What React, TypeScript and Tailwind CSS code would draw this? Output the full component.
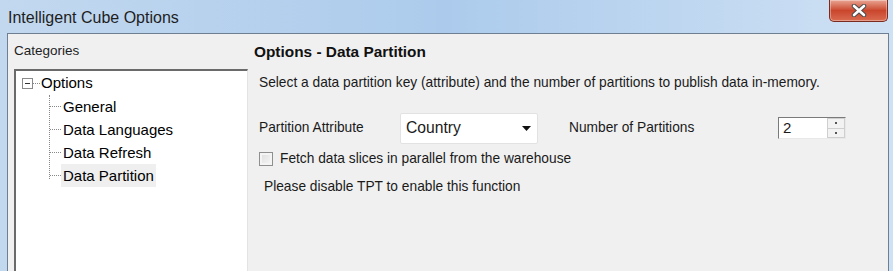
import { useState } from 'react';

const treeItems = ['General', 'Data Languages', 'Data Refresh', 'Data Partition'];

// Classic Windows 7 dialog: title bar, categories tree on the left, options on the right
const CloseButton = () => (
  <div className="w-[59px] h-[22px] rounded-b-[5px] border border-t-0 border-[#7a2a1e] bg-gradient-to-b from-[#e8a493] via-[#c9462c] to-[#d96b50] flex items-center justify-center shadow-[inset_0_0_0_1px_rgba(255,255,255,0.35)]">
    <svg width="16" height="13" viewBox="0 0 16 13">
      <path d="M3 2 L13 11 M13 2 L3 11" stroke="#4a4a4a" strokeWidth="4.5" strokeLinecap="round" />
      <path d="M3 2 L13 11 M13 2 L3 11" stroke="#ffffff" strokeWidth="2.6" strokeLinecap="round" />
    </svg>
  </div>
);

const App = () => {
  const [selected, setSelected] = useState('Data Partition');
  const [fetchParallel, setFetchParallel] = useState(false);

  return (
    <div
      className="w-[893px] h-[271px] overflow-hidden flex flex-col bg-gradient-to-r from-[#c2d8ef] via-[#accbec] to-[#cfe1f4] text-[#000]"
      style={{ fontFamily: '"Liberation Sans", Arial, sans-serif' }}
    >
      {/* Title bar */}
      <div className="h-[33px] flex justify-between pl-[8px] pr-[5px]">
        <span className="text-[16px] text-[#1e1e1e] pt-[6px]">Intelligent Cube Options</span>
        <CloseButton />
      </div>

      {/* Client area */}
      <div className="flex-1 flex pl-[7px] pr-[4px]">
        <div className="flex-1 flex border border-b-0 border-[#6e7f92] bg-[#f0f0f0]">
          {/* Categories */}
          <div className="w-[240px] flex flex-col pl-[6px]">
            <div className="h-[35px] flex items-center text-[13.5px] text-[#1e1e1e]">Categories</div>
            <div className="flex-1 bg-white border-t-2 border-l-2 border-r border-t-[#6a6a6a] border-l-[#6a6a6a] border-r-[#e3e3e3] pl-[6px]">
              <div className="flex items-center h-[24px]">
                <div className="w-[11px] h-[11px] border border-[#8a8a8a] bg-white flex items-center justify-center">
                  <div className="w-[5px] h-px bg-[#333]" />
                </div>
                <div className="w-[7px] border-t border-dotted border-[#888]" />
                <span className="text-[15px] pl-[1px]">Options</span>
              </div>
              <div className="ml-[27px] border-l border-dotted border-[#888] h-[84px] flex flex-col">
                {treeItems.map((item) => (
                  <div key={item} className="flex items-center h-[23.3px]" onClick={() => setSelected(item)}>
                    <div className="w-[11px] border-t border-dotted border-[#888]" />
                    <span
                      className={`text-[15px] px-[2px] leading-[23px] ${selected === item ? 'bg-[#efefef]' : ''}`}
                    >
                      {item}
                    </span>
                  </div>
                ))}
              </div>
            </div>
          </div>

          {/* Options panel */}
          <div className="flex-1 flex flex-col pl-[6px] text-[13.75px] text-[#1a1a1a]">
            <div className="h-[35px] flex items-center text-[15.4px] font-bold text-[#111]">Options - Data Partition</div>
            <div className="pl-[5px] pt-[4px]">Select a data partition key (attribute) and the number of partitions to publish data in-memory.</div>

            <div className="flex items-center pl-[5px] mt-[19px] h-[31px]">
              <span className="w-[141px]">Partition Attribute</span>
              <div className="w-[138px] h-[31px] bg-white border border-[#e2e2e2] rounded-[2px] flex items-center justify-between pl-[5px] pr-[6px]">
                <span className="text-[15.7px]">Country</span>
                <svg width="9" height="5" viewBox="0 0 9 5">
                  <path d="M0 0 H9 L4.5 5 Z" fill="#111" />
                </svg>
              </div>
              <span className="ml-[31px] w-[209px]">Number of Partitions</span>
              <div className="w-[68px] h-[22px] bg-white border border-t-[#7a7a7a] border-l-[#7a7a7a] border-r-[#e8e8e8] border-b-[#e8e8e8] flex">
                <span className="flex-1 text-[15px] leading-[20px] pl-[4px]">2</span>
                <div className="w-[18px] flex flex-col">
                  <div className="flex-1 bg-[#f2f2f2] border border-[#cfcfcf] flex items-center justify-center">
                    <div className="w-[2px] h-[2px] bg-[#555]" />
                  </div>
                  <div className="flex-1 bg-[#f2f2f2] border border-t-0 border-[#cfcfcf] flex items-center justify-center">
                    <div className="w-[2px] h-[2px] bg-[#555]" />
                  </div>
                </div>
              </div>
            </div>

            <label className="flex items-center pl-[5px] mt-[7px] h-[17px]">
              <input
                type="checkbox"
                checked={fetchParallel}
                onChange={(e) => setFetchParallel(e.target.checked)}
                className="appearance-none w-[14px] h-[14px] border border-[#8e8f8f] bg-gradient-to-br from-[#dcdcdc] to-[#f8f8f8] shadow-[inset_0_0_0_2px_#f4f4f4]"
              />
              <span className="pl-[7px]">Fetch data slices in parallel from the warehouse</span>
            </label>
            <div className="pl-[10px] mt-[9px]">Please disable TPT to enable this function</div>
          </div>
        </div>
      </div>
    </div>
  );
};

export default App;
